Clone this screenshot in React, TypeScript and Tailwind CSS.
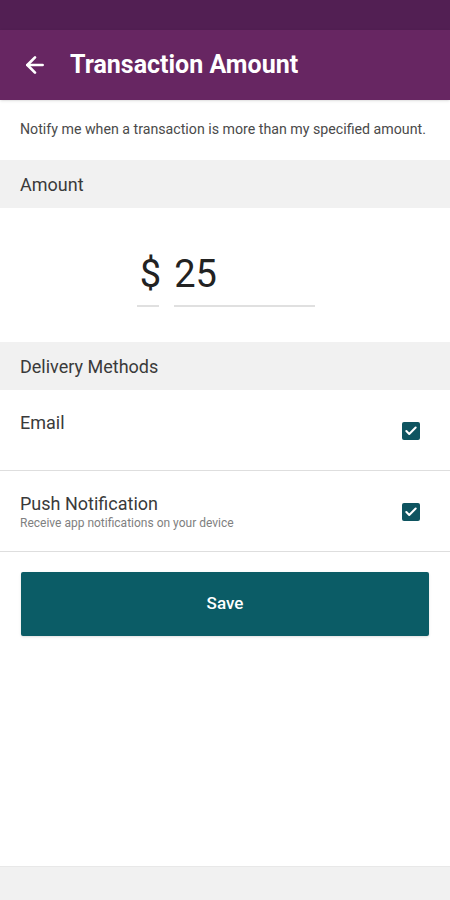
import { ArrowLeft, Check } from "lucide-react";

function CheckRow({ title, sub }: { title: string; sub?: string }) {
  return (
    <div className="flex h-[81px] items-start justify-between border-b border-[#dedede] px-5 pt-[21px]">
      <div>
        <p className="text-[18px] leading-[24px] text-[#3a3a3a]">{title}</p>
        {sub && <p className="text-[12px] leading-[14px] text-[#808080]">{sub}</p>}
      </div>
      <div className="mr-[10px] mt-[11px] flex h-[18px] w-[18px] items-center justify-center rounded-[2px] bg-[#0e5460]">
        <Check size={14} strokeWidth={3.5} className="text-white" />
      </div>
    </div>
  );
}

export default function App() {
  return (
    <div className="flex h-[900px] w-[450px] flex-col bg-white font-['Roboto',sans-serif]">
      <div className="h-[30px] bg-[#521f53]" />
      <header className="flex h-[70px] items-center bg-[#672662] px-[22px] shadow-sm">
        <ArrowLeft size={26} strokeWidth={2.5} className="text-white" />
        <h1 className="ml-[22px] text-[25px] font-bold text-white">Transaction Amount</h1>
      </header>

      <p className="flex h-[60px] items-center px-5 text-[14.2px] text-[#4a4a4a]">
        Notify me when a transaction is more than my specified amount.
      </p>

      <div className="flex h-[48px] items-center bg-[#f1f1f1] px-5 text-[18px] text-[#3a3a3a]">Amount</div>

      <div className="flex h-[134px] justify-center pt-[36px]">
        <div className="flex gap-[10px] pl-[2px]">
          <div className="flex flex-col">
            <span className="h-[61px] px-[3px] text-[38px] leading-[60px] text-[#222]">$</span>
            <div className="h-[2px] w-[22px] bg-[#e0e0e0]" />
          </div>
          <div className="flex flex-col">
            <span className="h-[61px] text-[38px] leading-[60px] text-[#222]">25</span>
            <div className="h-[2px] w-[141px] bg-[#e0e0e0]" />
          </div>
        </div>
      </div>

      <div className="flex h-[48px] items-center bg-[#f1f1f1] px-5 text-[18px] text-[#3a3a3a]">Delivery Methods</div>

      <CheckRow title="Email" />
      <CheckRow title="Push Notification" sub="Receive app notifications on your device" />

      <div className="px-[21px] pt-[20px]">
        <button className="flex h-[64px] w-full items-center justify-center rounded-[2px] bg-[#0b5c66] text-[17px] font-medium text-white shadow-sm">
          Save
        </button>
      </div>

      <div className="flex-1" />
      <div className="h-[34px] border-t border-[#e8e8e8] bg-[#f1f1f1]" />
    </div>
  );
}
